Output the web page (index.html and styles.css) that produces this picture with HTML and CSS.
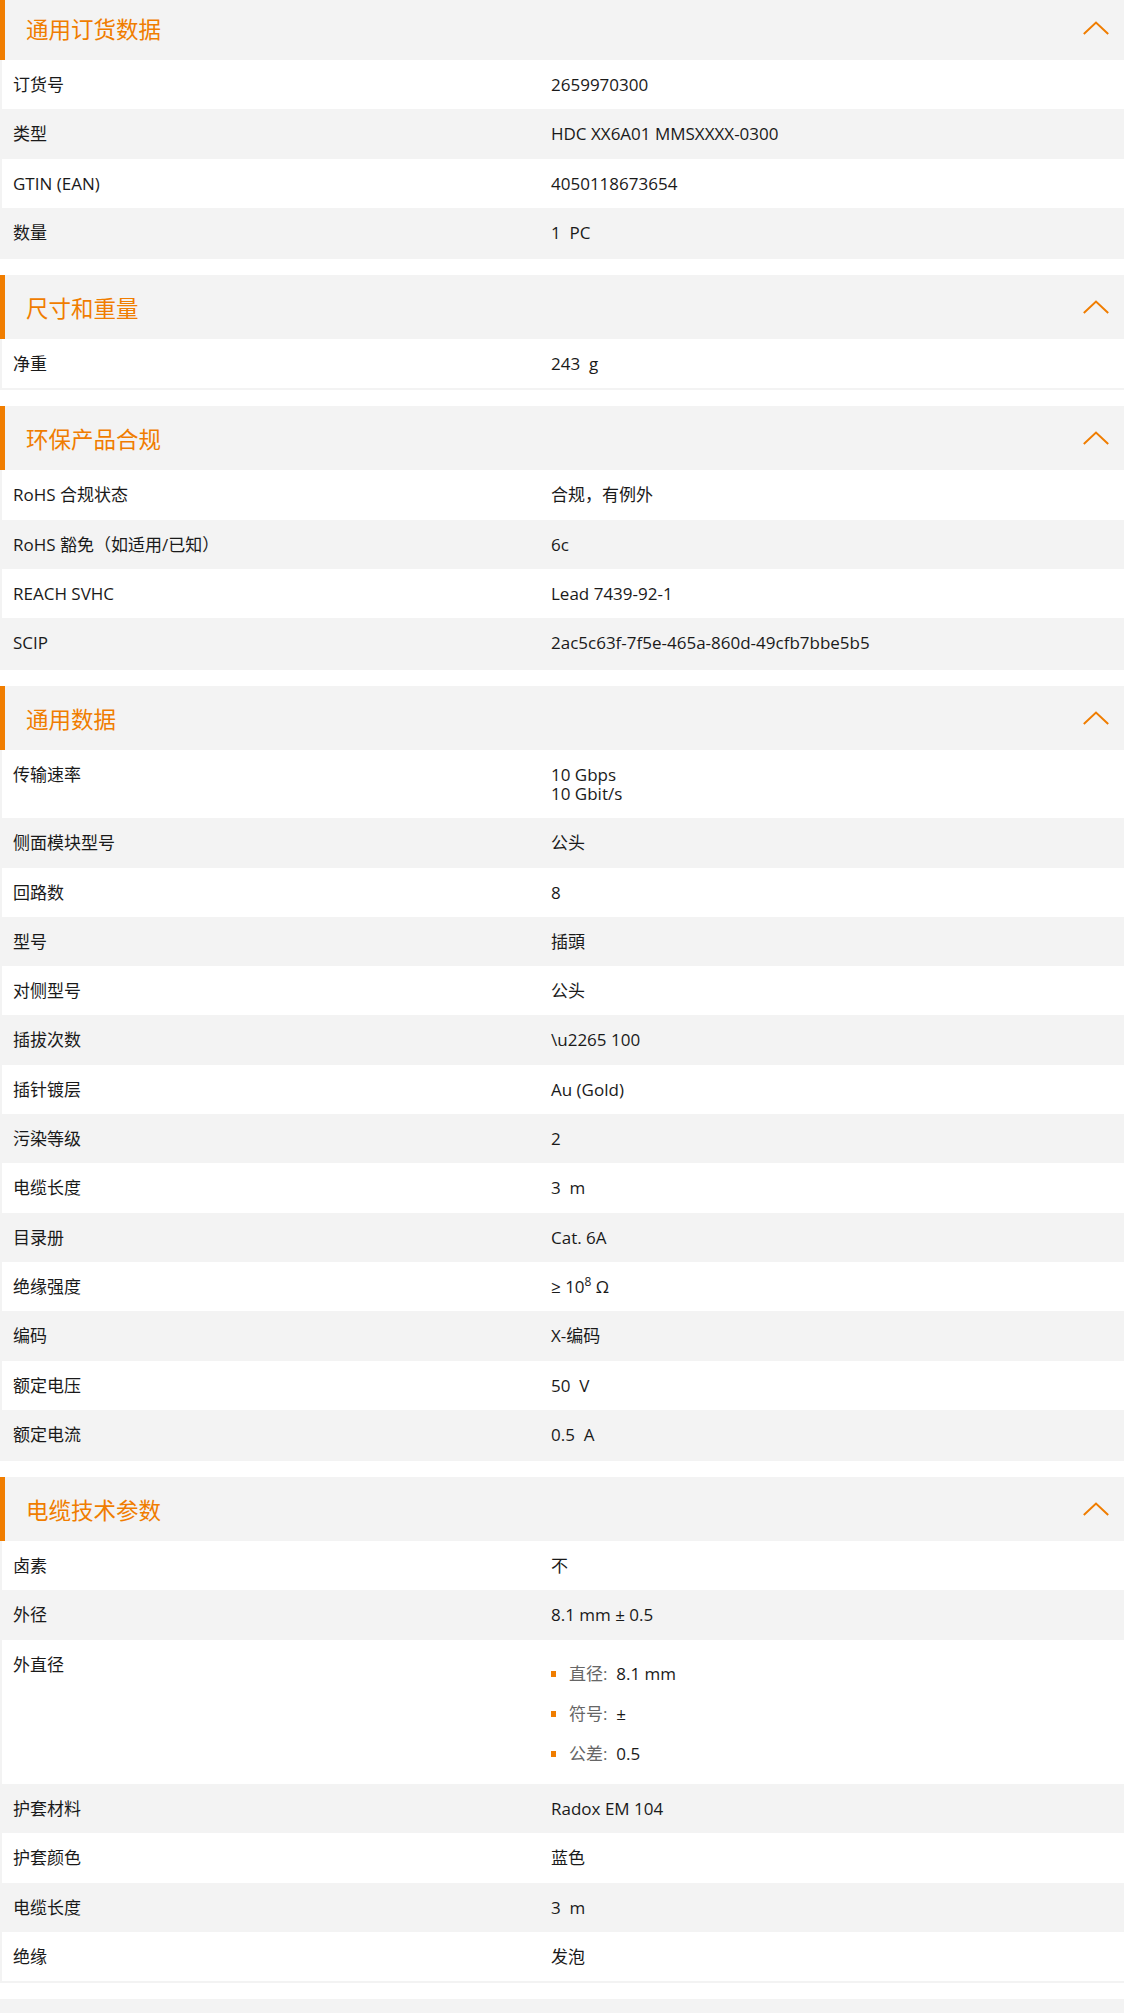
FILE: index.html
```html
<!DOCTYPE html>
<html lang="zh-CN">
<head>
<meta charset="utf-8">
<title>产品数据</title>
<link rel="stylesheet" href="styles.css">
</head>
<body>
<main class="page">

<section class="sec sec-first">
  <div class="sec-head"><h2 class="sec-title">通用订货数据</h2><svg class="chev" width="26" height="14" viewBox="0 0 26 14"><polyline points="0.8,13 13,1.5 25.2,13" fill="none" stroke="#f07d00" stroke-width="2"/></svg></div>
  <div class="tbl">
    <div class="row"><div class="lab">订货号</div><div class="val">2659970300</div></div>
    <div class="row"><div class="lab">类型</div><div class="val">HDC XX6A01 MMSXXXX-0300</div></div>
    <div class="row"><div class="lab">GTIN (EAN)</div><div class="val">4050118673654</div></div>
    <div class="row"><div class="lab">数量</div><div class="val">1&nbsp; PC</div></div>
  </div>
</section>

<section class="sec">
  <div class="sec-head"><h2 class="sec-title">尺寸和重量</h2><svg class="chev" width="26" height="14" viewBox="0 0 26 14"><polyline points="0.8,13 13,1.5 25.2,13" fill="none" stroke="#f07d00" stroke-width="2"/></svg></div>
  <div class="tbl">
    <div class="row"><div class="lab">净重</div><div class="val">243&nbsp; g</div></div>
  </div>
</section>

<section class="sec">
  <div class="sec-head"><h2 class="sec-title">环保产品合规</h2><svg class="chev" width="26" height="14" viewBox="0 0 26 14"><polyline points="0.8,13 13,1.5 25.2,13" fill="none" stroke="#f07d00" stroke-width="2"/></svg></div>
  <div class="tbl">
    <div class="row"><div class="lab">RoHS 合规状态</div><div class="val">合规，有例外</div></div>
    <div class="row"><div class="lab">RoHS 豁免（如适用/已知）</div><div class="val">6c</div></div>
    <div class="row"><div class="lab">REACH SVHC</div><div class="val">Lead 7439-92-1</div></div>
    <div class="row"><div class="lab">SCIP</div><div class="val">2ac5c63f-7f5e-465a-860d-49cfb7bbe5b5</div></div>
  </div>
</section>

<section class="sec">
  <div class="sec-head"><h2 class="sec-title">通用数据</h2><svg class="chev" width="26" height="14" viewBox="0 0 26 14"><polyline points="0.8,13 13,1.5 25.2,13" fill="none" stroke="#f07d00" stroke-width="2"/></svg></div>
  <div class="tbl">
    <div class="row"><div class="lab">传输速率</div><div class="val">10 Gbps<br>10 Gbit/s</div></div>
    <div class="row"><div class="lab">侧面模块型号</div><div class="val">公头</div></div>
    <div class="row"><div class="lab">回路数</div><div class="val">8</div></div>
    <div class="row"><div class="lab">型号</div><div class="val">插頭</div></div>
    <div class="row"><div class="lab">对侧型号</div><div class="val">公头</div></div>
    <div class="row"><div class="lab">插拔次数</div><div class="val">\u2265 100</div></div>
    <div class="row"><div class="lab">插针镀层</div><div class="val">Au (Gold)</div></div>
    <div class="row"><div class="lab">污染等级</div><div class="val">2</div></div>
    <div class="row"><div class="lab">电缆长度</div><div class="val">3&nbsp; m</div></div>
    <div class="row"><div class="lab">目录册</div><div class="val">Cat. 6A</div></div>
    <div class="row"><div class="lab">绝缘强度</div><div class="val">≥ 10<sup class="sup">8</sup> Ω</div></div>
    <div class="row"><div class="lab">编码</div><div class="val">X-编码</div></div>
    <div class="row"><div class="lab">额定电压</div><div class="val">50&nbsp; V</div></div>
    <div class="row"><div class="lab">额定电流</div><div class="val">0.5&nbsp; A</div></div>
  </div>
</section>

<section class="sec">
  <div class="sec-head"><h2 class="sec-title">电缆技术参数</h2><svg class="chev" width="26" height="14" viewBox="0 0 26 14"><polyline points="0.8,13 13,1.5 25.2,13" fill="none" stroke="#f07d00" stroke-width="2"/></svg></div>
  <div class="tbl">
    <div class="row"><div class="lab">卤素</div><div class="val">不</div></div>
    <div class="row"><div class="lab">外径</div><div class="val">8.1 mm ± 0.5</div></div>
    <div class="row"><div class="lab">外直径</div><div class="val">
      <ul class="blist">
        <li class="bitem"><span class="bkey">直径:</span>&nbsp; 8.1 mm</li>
        <li class="bitem"><span class="bkey">符号:</span>&nbsp; ±</li>
        <li class="bitem"><span class="bkey">公差:</span>&nbsp; 0.5</li>
      </ul>
    </div></div>
    <div class="row"><div class="lab">护套材料</div><div class="val">Radox EM 104</div></div>
    <div class="row"><div class="lab">护套颜色</div><div class="val">蓝色</div></div>
    <div class="row"><div class="lab">电缆长度</div><div class="val">3&nbsp; m</div></div>
    <div class="row"><div class="lab">绝缘</div><div class="val">发泡</div></div>
  </div>
</section>

<div class="tail"></div>

</main>
</body>
</html>
```

FILE: styles.css
```css
html {
  overflow: hidden;
}
body {
  margin: 0;
  background: #ffffff;
  color: #1a1a1a;
  font-family: "Open Sans", "Noto Sans CJK SC", sans-serif;
  font-size: 17px;
}
.page {
  display: flex;
  flex-direction: column;
}
.sec {
  margin-bottom: 16px;
}
.sec-first {
  margin-top: -4px;
}
.sec-head {
  height: 64px;
  background: #f3f3f3;
  border-left: 5px solid #f07d00;
  padding: 0 15px 0 21px;
  display: flex;
  align-items: center;
  justify-content: space-between;
  box-sizing: border-box;
}
.sec-title {
  margin: 0;
  font-weight: normal;
  font-size: 22.5px;
  line-height: 30px;
  color: #f07d00;
  font-family: "Noto Sans CJK SC", sans-serif;
}
.chev {
  display: block;
}
.tbl {
  border-left: 2px solid #f3f3f3;
  border-bottom: 2px solid #f3f3f3;
}
.row {
  display: grid;
  grid-template-columns: 538px 1fr;
  background: #ffffff;
  line-height: 19.3px;
}
.row:nth-child(even) {
  background: #f3f3f3;
}
.lab, .val {
  padding: 15px 11px;
}
.sup {
  font-size: 12px;
  line-height: 0;
  vertical-align: 7px;
}
.blist {
  list-style: none;
  margin: 9px 0 6px;
  padding: 0;
}
.bitem {
  position: relative;
  padding-left: 18px;
}
.bitem + .bitem {
  margin-top: 20.7px;
}
.bitem::before {
  content: "";
  position: absolute;
  left: 0;
  top: 7px;
  width: 5px;
  height: 6px;
  background: #f07d00;
}
.bkey {
  color: #666666;
}
.tail {
  height: 20px;
  background: #f3f3f3;
}
```
